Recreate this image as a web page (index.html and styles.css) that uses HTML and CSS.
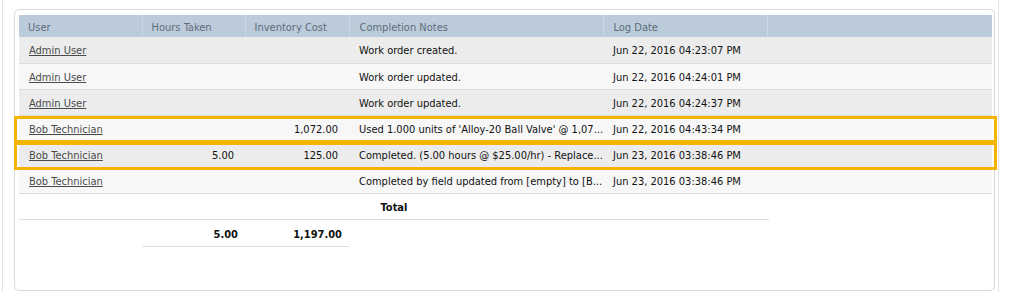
FILE: index.html
```html
<!DOCTYPE html>
<html>
<head>
<meta charset="utf-8">
<link rel="stylesheet" href="styles.css">
</head>
<body>
<div class="frame">
  <div class="card">
    <table class="grid">
      <colgroup>
        <col class="c-user"><col class="c-hours"><col class="c-inv"><col class="c-notes"><col class="c-date"><col>
      </colgroup>
      <thead>
        <tr><th>User</th><th>Hours Taken</th><th>Inventory Cost</th><th>Completion Notes</th><th>Log Date</th><th class="last"></th></tr>
      </thead>
      <tbody>
        <tr class="odd"><td><a href="#">Admin User</a></td><td class="num"></td><td class="num"></td><td>Work order created.</td><td>Jun 22, 2016 04:23:07 PM</td><td></td></tr>
        <tr class="even"><td><a href="#">Admin User</a></td><td class="num"></td><td class="num"></td><td>Work order updated.</td><td>Jun 22, 2016 04:24:01 PM</td><td></td></tr>
        <tr class="odd"><td><a href="#">Admin User</a></td><td class="num"></td><td class="num"></td><td>Work order updated.</td><td>Jun 22, 2016 04:24:37 PM</td><td></td></tr>
        <tr class="even"><td><a href="#">Bob Technician</a></td><td class="num"></td><td class="num">1,072.00</td><td>Used 1.000 units of 'Alloy-20 Ball Valve' @ 1,07...</td><td>Jun 22, 2016 04:43:34 PM</td><td></td></tr>
        <tr class="odd"><td><a href="#">Bob Technician</a></td><td class="num">5.00</td><td class="num">125.00</td><td>Completed. (5.00 hours @ $25.00/hr) - Replace...</td><td>Jun 23, 2016 03:38:46 PM</td><td></td></tr>
        <tr class="even"><td><a href="#">Bob Technician</a></td><td class="num"></td><td class="num"></td><td>Completed by field updated from [empty] to [B...</td><td>Jun 23, 2016 03:38:46 PM</td><td></td></tr>
      </tbody>
    </table>
    <table class="totals">
      <colgroup>
        <col class="c-user"><col class="c-hours"><col class="c-inv"><col>
      </colgroup>
      <tr class="total-label"><td colspan="4">Total</td></tr>
      <tr class="total-values"><td></td><td class="tv">5.00</td><td class="tv">1,197.00</td><td class="blank"></td></tr>
    </table>
    <div class="mark mark1"></div>
    <div class="mark mark2"></div>
  </div>
</div>
</body>
</html>
```

FILE: styles.css
```css
html, body {
  margin: 0;
  padding: 0;
  background: #ffffff;
}
body {
  font-family: "DejaVu Sans Condensed", "DejaVu Sans", sans-serif;
  font-size: 11px;
  color: #111111;
}
.frame {
  margin-left: 2px;
  width: 997px;
  height: 292px;
  border-left: 1px solid #e3e3e3;
  border-right: 1px solid #e3e3e3;
  box-sizing: border-box;
  padding-top: 9px;
  padding-left: 11px;
}
.card {
  position: relative;
  width: 981px;
  height: 282px;
  box-sizing: border-box;
  border: 1px solid #d9d9d9;
  border-radius: 5px;
  padding: 5px 0 0 4px;
}
table {
  border-collapse: collapse;
  table-layout: fixed;
}
.grid {
  width: 973px;
}
.c-user { width: 123px; }
.c-hours { width: 103px; }
.c-inv { width: 104px; }
.c-notes { width: 254px; }
.c-date { width: 164px; }
.grid th {
  background: #bccbd9;
  color: #5c6b7b;
  font-weight: normal;
  text-align: left;
  height: 22px;
  box-sizing: border-box;
  padding: 2px 0 0 9px;
  border-left: 1px solid #cbd7e2;
  white-space: nowrap;
}
.grid th:first-child { border-left: none; }
.grid th:nth-child(4), .grid th:nth-child(5) { padding-left: 10px; }
.grid td {
  height: 26px;
  box-sizing: border-box;
  padding: 2px 0 0 10px;
  border-bottom: 1px solid #dcdcdc;
  white-space: nowrap;
  overflow: hidden;
}
.grid td.num {
  text-align: right;
  padding: 2px 11px 0 0;
}
.grid tr.odd td { background: #ececec; }
.grid tr.even td { background: #f7f7f7; }
.grid a {
  color: #4a4a4a;
  text-decoration: underline;
}
.totals {
  width: 750px;
}
.totals .total-label td {
  height: 26px;
  box-sizing: border-box;
  text-align: center;
  font-weight: bold;
  border-bottom: 1px solid #dddddd;
  padding: 2px 0 0 0;
}
.totals .total-values td {
  height: 27px;
  box-sizing: border-box;
  padding: 2px 0 0 0;
}
.totals td.tv {
  text-align: right;
  font-weight: bold;
  padding-right: 7px;
  border-bottom: 1px solid #dddddd;
}
.mark {
  position: absolute;
  left: -1px;
  width: 983px;
  box-sizing: border-box;
  border: 3px solid #f5b400;
}
.mark1 {
  top: 106px;
  height: 27px;
}
.mark2 {
  top: 132px;
  height: 28px;
}
```
